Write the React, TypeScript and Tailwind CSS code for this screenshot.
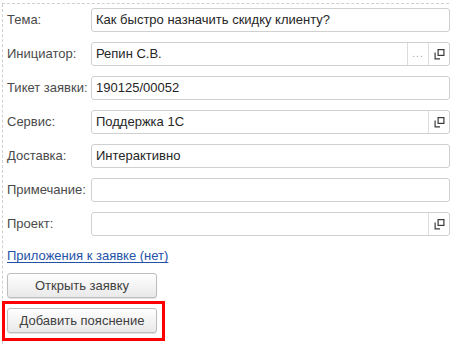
import type { ReactNode } from "react";

type Field = {
  label: string;
  value?: string;
  pick?: boolean;
  open?: boolean;
};

const FIELDS: Field[] = [
  { label: "Тема:", value: "Как быстро назначить скидку клиенту?" },
  { label: "Инициатор:", value: "Репин С.В.", pick: true, open: true },
  { label: "Тикет заявки:", value: "190125/00052" },
  { label: "Сервис:", value: "Поддержка 1С", open: true },
  { label: "Доставка:", value: "Интерактивно" },
  { label: "Примечание:" },
  { label: "Проект:", open: true },
];

const OpenIcon = () => (
  <svg width="11" height="11" viewBox="0 0 11 11" fill="none" stroke="#3a3a3a" strokeWidth="1.2">
    <rect x="4.1" y="0.6" width="5.8" height="5.8" />
    <path d="M1.1 3.6V9.9H6" />
  </svg>
);

const FieldButton = ({ children }: { children: ReactNode }) => (
  <div className="w-[21px] h-full flex items-center justify-center border-l border-[#dcdcdc] shrink-0">
    {children}
  </div>
);

const FormButton = ({ children }: { children: ReactNode }) => (
  <button className="w-[150px] h-[25px] rounded-[3px] border border-[#bdbdbd] bg-gradient-to-b from-white to-[#e9e9e9] shadow-[0_1px_1px_rgba(0,0,0,0.12)] text-[13px] text-[#404040] leading-none">
    {children}
  </button>
);

export default function App() {
  return (
    <div className="w-[458px] h-[344px] bg-white overflow-hidden font-['Liberation_Sans',Arial,sans-serif]">
      <div className="ml-[2px] mt-[3px] w-[447px] h-[341px] flex flex-col">
        {/* dashed group frame: top + left only */}
        <div className="h-px shrink-0 border-t border-dashed border-[#cfcfcf]" />
        <div className="flex-1 border-l border-dashed border-[#cfcfcf] pt-[4px] pl-[4px]">
          <div className="flex flex-col gap-[10px]">
            {FIELDS.map((f) => (
              <div key={f.label} className="flex items-center h-[24px]">
                <div className="w-[84px] shrink-0 text-[13px] text-[#4a4a4a]">{f.label}</div>
                <div className="w-[359px] shrink-0 h-[24px] flex items-center rounded-[3px] border border-[#d0d0d0] bg-white">
                  <div className="flex-1 px-[4px] text-[13px] text-[#262626] truncate">{f.value}</div>
                  {f.pick && (
                    <FieldButton>
                      <span className="text-[10px] text-[#a0a0a0] tracking-[1px] -mt-[2px]">...</span>
                    </FieldButton>
                  )}
                  {f.open && (
                    <FieldButton>
                      <OpenIcon />
                    </FieldButton>
                  )}
                </div>
              </div>
            ))}
          </div>

          <div className="mt-[12px] h-[16px] flex items-center">
            <a href="#" className="text-[13px] text-[#2452a8] underline underline-offset-2">
              Приложения к заявке (нет)
            </a>
          </div>

          <div className="mt-[9px]">
            <FormButton>Открыть заявку</FormButton>
          </div>

          <div className="mt-[10px] relative w-[150px]">
            <FormButton>Добавить пояснение</FormButton>
            <div className="absolute -left-[5px] -top-[7px] -right-[8px] -bottom-[8px] border-[3px] border-[#ff0000] pointer-events-none" />
          </div>
        </div>
      </div>
    </div>
  );
}
